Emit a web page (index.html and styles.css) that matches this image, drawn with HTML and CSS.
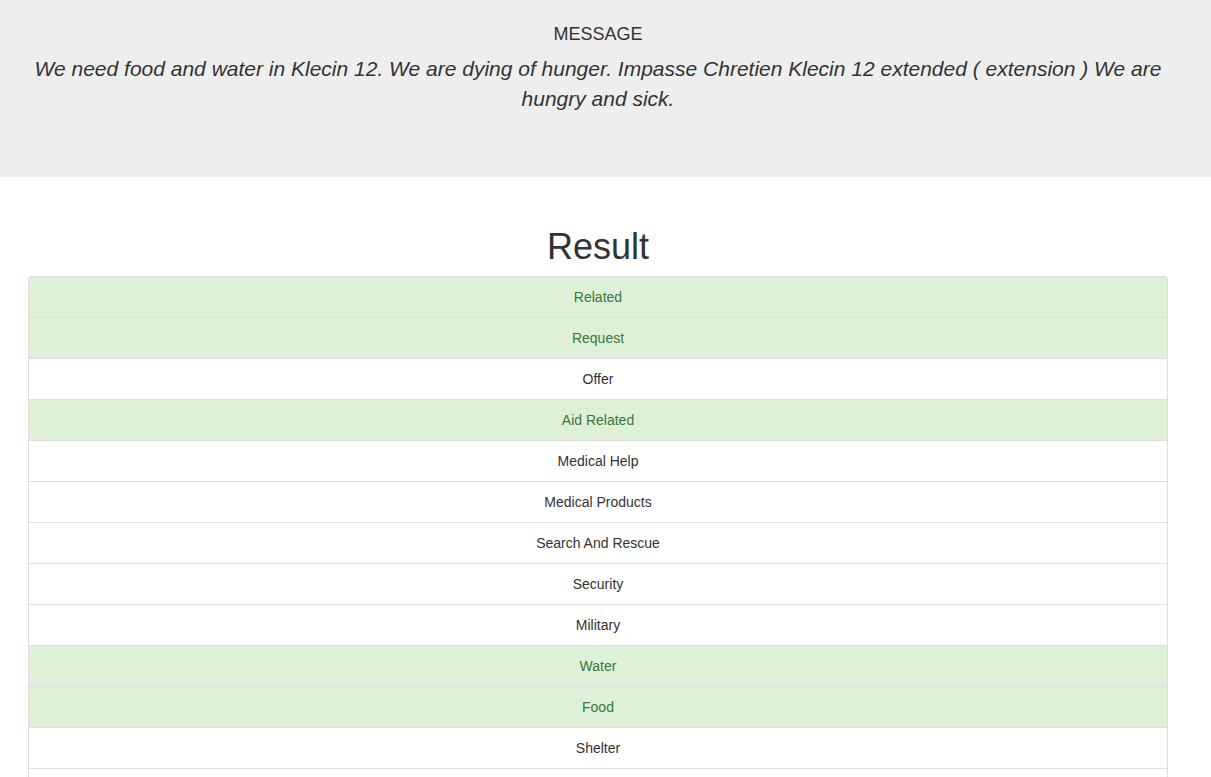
FILE: index.html
```html
<!DOCTYPE html>
<html lang="en">
<head>
<meta charset="utf-8">
<title>Disaster Response</title>
<link rel="stylesheet" href="styles.css">
</head>
<body>
<div class="jumbotron">
  <div class="container">
    <h4 class="label-title">MESSAGE</h4>
    <p class="message">We need food and water in Klecin 12. We are dying of hunger. Impasse Chretien Klecin 12 extended ( extension ) We are hungry and sick.</p>
  </div>
</div>
<div class="container main">
  <h1 class="result-title">Result</h1>
  <ul class="list-group">
    <li class="item success">Related</li>
    <li class="item success">Request</li>
    <li class="item">Offer</li>
    <li class="item success">Aid Related</li>
    <li class="item">Medical Help</li>
    <li class="item">Medical Products</li>
    <li class="item">Search And Rescue</li>
    <li class="item">Security</li>
    <li class="item">Military</li>
    <li class="item success">Water</li>
    <li class="item success">Food</li>
    <li class="item">Shelter</li>
    <li class="item">Clothing</li>
    <li class="item">Money</li>
    <li class="item">Missing People</li>
    <li class="item">Refugees</li>
    <li class="item">Death</li>
    <li class="item">Other Aid</li>
  </ul>
</div>
</body>
</html>
```
FILE: styles.css
```css
* { box-sizing: border-box; }
html, body { margin: 0; padding: 0; }
body {
  font-family: "Liberation Sans", Arial, Helvetica, sans-serif;
  font-size: 14px;
  line-height: 1.42857;
  color: #333;
  background: #fff;
}
.container {
  width: 1140px;
  margin-left: 28px;
}
.main {
  display: flow-root;
}
.jumbotron {
  background: #eee;
  padding: 24px 0 48px;
  margin-bottom: 30px;
}
.label-title {
  margin: 0 0 10px;
  font-size: 18px;
  font-weight: 400;
  line-height: 20px;
  text-align: center;
}
.message {
  margin: 0 0 15px;
  font-size: 21px;
  line-height: 30px;
  font-style: italic;
  text-align: center;
}
.result-title {
  margin: 20px 0 10px;
  font-size: 36px;
  font-weight: 400;
  line-height: 39px;
  text-align: center;
}
.list-group {
  list-style: none;
  margin: 0 0 20px;
  padding: 0;
}
.item {
  display: block;
  padding: 10px 15px;
  line-height: 20px;
  background: #fff;
  border: 1px solid #ddd;
  margin-bottom: -1px;
  text-align: center;
}
.item:first-child {
  border-top-left-radius: 4px;
  border-top-right-radius: 4px;
}
.item:last-child {
  border-bottom-left-radius: 4px;
  border-bottom-right-radius: 4px;
  margin-bottom: 0;
}
.item.success {
  background: #dff0d8;
  color: #3c763d;
}
```
